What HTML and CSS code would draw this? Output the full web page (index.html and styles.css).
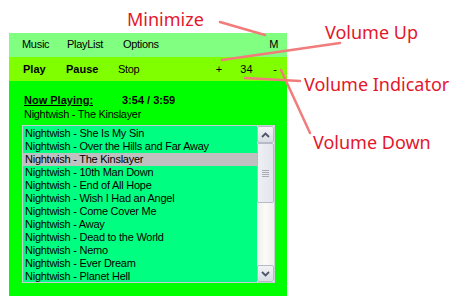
FILE: index.html
```html
<!DOCTYPE html>
<html>
<head>
<meta charset="utf-8">
<title>Player</title>
<link rel="stylesheet" href="styles.css">
</head>
<body>
<div class="player">
  <div class="menubar">
    <span class="menu m-music">Music</span>
    <span class="menu m-playlist">PlayList</span>
    <span class="menu m-options">Options</span>
    <span class="menu m-min">M</span>
  </div>
  <div class="toolbar">
    <span class="btn b-play">Play</span>
    <span class="btn b-pause">Pause</span>
    <span class="btn b-stop">Stop</span>
    <span class="vol v-up">+</span>
    <span class="vol v-level">34</span>
    <span class="vol v-down">-</span>
  </div>
  <div class="main">
    <div class="now">
      <div class="now-head"><span class="now-label">Now Playing:</span><span class="now-time">3:54 / 3:59</span></div>
      <div class="now-track">Nightwish - The Kinslayer</div>
    </div>
    <div class="list">
      <ul class="items">
        <li>Nightwish - She Is My Sin</li>
        <li>Nightwish - Over the Hills and Far Away</li>
        <li class="sel">Nightwish - The Kinslayer</li>
        <li>Nightwish - 10th Man Down</li>
        <li>Nightwish - End of All Hope</li>
        <li>Nightwish - Wish I Had an Angel</li>
        <li>Nightwish - Come Cover Me</li>
        <li>Nightwish - Away</li>
        <li>Nightwish - Dead to the World</li>
        <li>Nightwish - Nemo</li>
        <li>Nightwish - Ever Dream</li>
        <li>Nightwish - Planet Hell</li>
      </ul>
      <div class="scrollbar">
        <div class="sb-btn"><svg width="9" height="6" viewBox="0 0 9 6"><path d="M1 5 L4.5 1.5 L8 5" fill="none" stroke="#4d5566" stroke-width="1.8"/></svg></div>
        <div class="sb-track">
          <div class="sb-thumb"><svg width="7" height="7" viewBox="0 0 7 7"><path d="M0 0.5 H7 M0 2.5 H7 M0 4.5 H7 M0 6.5 H7" stroke="#a8acb8" stroke-width="1"/></svg></div>
        </div>
        <div class="sb-btn"><svg width="9" height="6" viewBox="0 0 9 6"><path d="M1 1 L4.5 4.5 L8 1" fill="none" stroke="#4d5566" stroke-width="1.8"/></svg></div>
      </div>
    </div>
  </div>
</div>
<div class="notes">
  <svg class="lines" width="458" height="307" viewBox="0 0 458 307">
    <g stroke="#f27c7c" stroke-width="2.5" stroke-linecap="round" fill="none">
      <path d="M220 22 L265 35"/>
      <path d="M340 43 L222 60"/>
      <path d="M245 78 L300 81"/>
      <path d="M281 70 L310 133"/>
    </g>
  </svg>
  <span class="label l-min">Minimize</span>
  <span class="label l-up">Volume Up</span>
  <span class="label l-ind">Volume Indicator</span>
  <span class="label l-down">Volume Down</span>
</div>
</body>
</html>
```
FILE: styles.css
```css
html, body {
  margin: 0;
  background: #ffffff;
}
body {
  padding: 33px 0 0 9px;
  width: 458px;
  height: 307px;
  box-sizing: border-box;
  overflow: hidden;
  font-family: "Liberation Sans", Arial, sans-serif;
  font-size: 11px;
  color: #000;
}
.player {
  width: 278px;
}
.menubar {
  display: flex;
  height: 24px;
  box-sizing: border-box;
  padding: 5px 9px 0 13px;
  background: #80ff80;
  line-height: 13px;
  letter-spacing: -0.3px;
}
.m-music { width: 45px; }
.m-playlist { width: 56px; }
.m-min { margin-left: auto; }

.toolbar {
  display: flex;
  height: 24px;
  box-sizing: border-box;
  padding: 6px 10px 0 14px;
  background: #80ff00;
  line-height: 13px;
}
.b-play, .b-pause { font-weight: bold; }
.b-play { width: 43px; }
.b-pause { width: 52px; }
.b-stop { letter-spacing: -0.3px; }
.v-up { margin-left: auto; width: 24.5px; }
.v-level { width: 33px; }

.main {
  background: #00ff00;
  padding: 12px 12px 13px 13px;
}
.now {
  padding-left: 2px;
  line-height: 14px;
}
.now-head { font-weight: bold; }
.now-label {
  display: inline-block;
  width: 98px;
  text-decoration: underline;
}
.now-track { letter-spacing: -0.3px; }

.list {
  display: flex;
  margin-top: 4px;
  height: 158px;
  box-sizing: border-box;
  border: 1px solid #c9cdd1;
  background: #00ff80;
  overflow: hidden;
}
.items {
  list-style: none;
  margin: 0;
  padding: 1px 0 0 0;
  flex: 1;
  line-height: 13px;
  letter-spacing: -0.25px;
  overflow: hidden;
}
.items li {
  height: 13px;
  padding-left: 2px;
  white-space: nowrap;
}
.items li.sel { background: #c0c0c0; }

.scrollbar {
  width: 17px;
  display: flex;
  flex-direction: column;
  background: #f4f4f0;
}
.sb-btn {
  height: 17px;
  box-sizing: border-box;
  border: 1px solid #b6bac6;
  border-radius: 2px;
  background: linear-gradient(#f2f3f6, #d9dce4);
  display: flex;
  align-items: center;
  justify-content: center;
}
.sb-btn svg { display: block; }
.sb-track {
  flex: 1;
  background: linear-gradient(90deg, #eeeeea, #fbfbf9 50%, #eeeeea);
}
.sb-thumb {
  height: 60px;
  box-sizing: border-box;
  border: 1px solid #b6bac6;
  border-radius: 2px;
  background: linear-gradient(90deg, #eef0f4, #e2e5ec);
  display: flex;
  align-items: center;
  justify-content: center;
}
.sb-thumb svg { display: block; }

.notes {
  position: absolute;
  left: 0;
  top: 0;
  width: 458px;
  height: 307px;
  pointer-events: none;
}
.lines {
  position: absolute;
  left: 0;
  top: 0;
}
.label {
  position: absolute;
  font-family: "Noto Sans", "DejaVu Sans", sans-serif;
  font-size: 18px;
  line-height: 18px;
  color: #e4162b;
  white-space: nowrap;
}
.l-min { left: 127px; top: 10px; }
.l-up { left: 325px; top: 23px; }
.l-ind { left: 304px; top: 75px; }
.l-down { left: 313px; top: 133px; }
```
